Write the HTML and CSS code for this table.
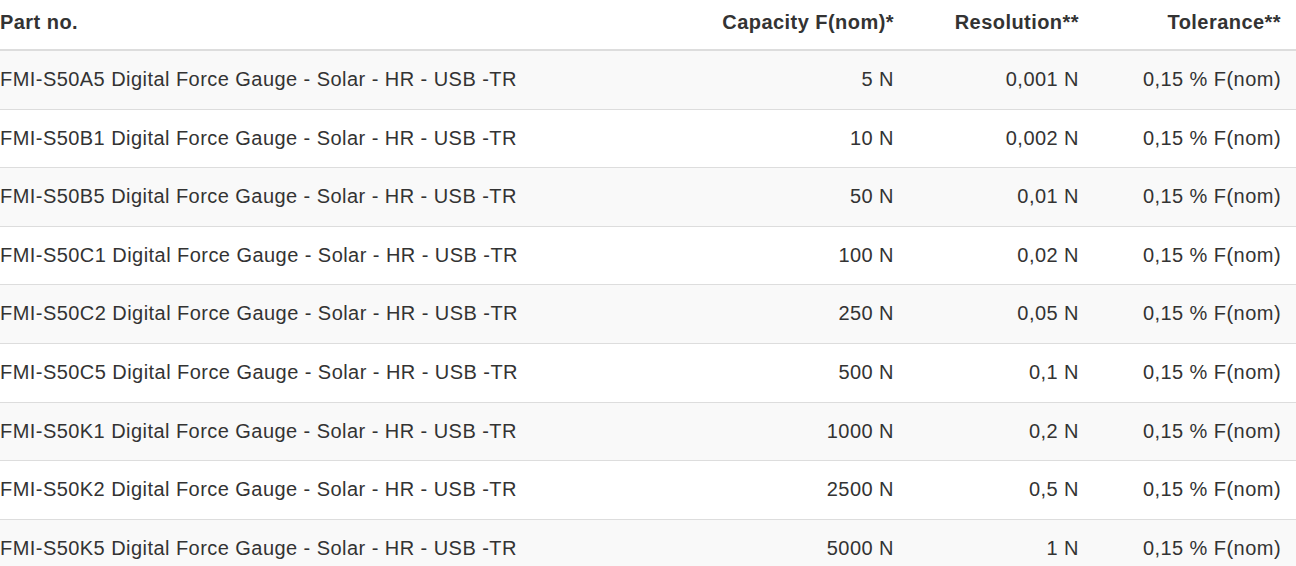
FILE: index.html
```html
<!DOCTYPE html>
<html>
<head>
<meta charset="utf-8">
<link rel="stylesheet" href="styles.css">
</head>
<body>
<table class="parts">
  <thead>
    <tr>
      <th class="c-part">Part no.</th>
      <th class="c-num c-cap">Capacity F(nom)*</th>
      <th class="c-num c-res">Resolution**</th>
      <th class="c-num c-tol">Tolerance**</th>
    </tr>
  </thead>
  <tbody>
    <tr><td class="c-part">FMI-S50A5 Digital Force Gauge - Solar - HR - USB -TR</td><td class="c-num">5 N</td><td class="c-num">0,001 N</td><td class="c-num">0,15 % F(nom)</td></tr>
    <tr><td class="c-part">FMI-S50B1 Digital Force Gauge - Solar - HR - USB -TR</td><td class="c-num">10 N</td><td class="c-num">0,002 N</td><td class="c-num">0,15 % F(nom)</td></tr>
    <tr><td class="c-part">FMI-S50B5 Digital Force Gauge - Solar - HR - USB -TR</td><td class="c-num">50 N</td><td class="c-num">0,01 N</td><td class="c-num">0,15 % F(nom)</td></tr>
    <tr><td class="c-part">FMI-S50C1 Digital Force Gauge - Solar - HR - USB -TR</td><td class="c-num">100 N</td><td class="c-num">0,02 N</td><td class="c-num">0,15 % F(nom)</td></tr>
    <tr><td class="c-part">FMI-S50C2 Digital Force Gauge - Solar - HR - USB -TR</td><td class="c-num">250 N</td><td class="c-num">0,05 N</td><td class="c-num">0,15 % F(nom)</td></tr>
    <tr><td class="c-part">FMI-S50C5 Digital Force Gauge - Solar - HR - USB -TR</td><td class="c-num">500 N</td><td class="c-num">0,1 N</td><td class="c-num">0,15 % F(nom)</td></tr>
    <tr><td class="c-part">FMI-S50K1 Digital Force Gauge - Solar - HR - USB -TR</td><td class="c-num">1000 N</td><td class="c-num">0,2 N</td><td class="c-num">0,15 % F(nom)</td></tr>
    <tr><td class="c-part">FMI-S50K2 Digital Force Gauge - Solar - HR - USB -TR</td><td class="c-num">2500 N</td><td class="c-num">0,5 N</td><td class="c-num">0,15 % F(nom)</td></tr>
    <tr><td class="c-part">FMI-S50K5 Digital Force Gauge - Solar - HR - USB -TR</td><td class="c-num">5000 N</td><td class="c-num">1 N</td><td class="c-num">0,15 % F(nom)</td></tr>
  </tbody>
</table>
</body>
</html>
```
FILE: styles.css
```css
html, body {
  margin: 0;
  padding: 0;
  background: #fff;
}
body {
  font-family: "Liberation Sans", Arial, Helvetica, sans-serif;
  font-size: 20px;
  letter-spacing: 0.45px;
  color: #333;
}
.parts {
  width: 1296px;
  border-collapse: collapse;
  border-spacing: 0;
  table-layout: fixed;
}
.parts th,
.parts td {
  line-height: 25.6px;
  padding: 16px 15px;
  text-align: left;
  vertical-align: top;
}
.parts th {
  font-weight: bold;
  padding-top: 9.5px;
  padding-bottom: 13.9px;
  border-bottom: 2px solid #ddd;
}
.parts td {
  border-top: 1px solid #ddd;
}
.parts tbody tr:first-child td {
  border-top: 0;
}
.parts tbody tr:nth-child(odd) {
  background: #f9f9f9;
}
.parts .c-part {
  padding-left: 0;
}
.parts .c-num {
  text-align: right;
  padding-right: 15px;
}
.parts .c-cap { width: 300px; }
.parts .c-res { width: 155px; }
.parts .c-tol { width: 172px; }
```
